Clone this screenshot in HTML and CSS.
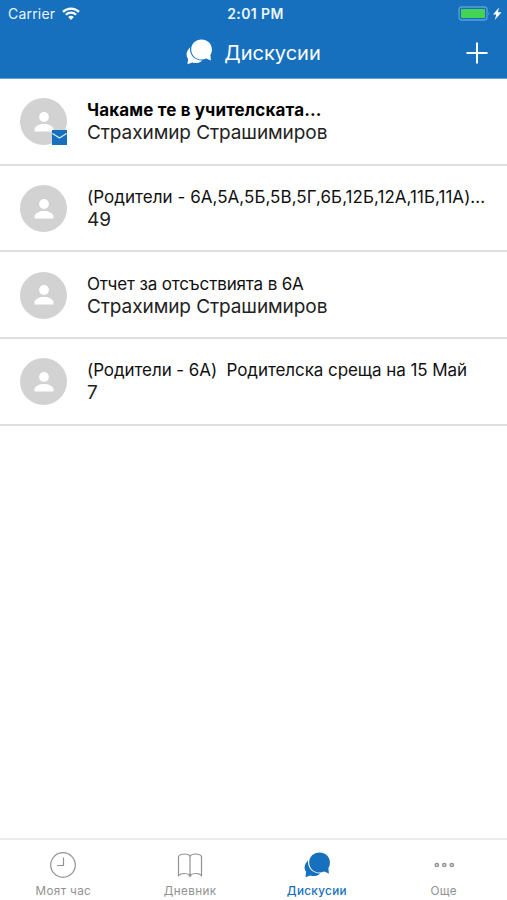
FILE: index.html
```
<!DOCTYPE html>
<html lang="bg">
<head>
<meta charset="utf-8">
<title>Дискусии</title>
<link rel="stylesheet" href="styles.css">
</head>
<body>
<svg class="defs" aria-hidden="true">
  <symbol id="chat" viewBox="0 0 26 26">
    <path d="M4.100 8.200C-.4 12.800 0 17 2.100 19.800L1.500 25.300l4.800-1.800c3.600 1.200 7.200.5 9.900-2.100C8.500 21.500 3.100 15.700 4.100 8.200z"/>
    <path d="M15.500.5C9.600.5 5.200 4.800 5.200 10.400c0 5.700 4.600 10.100 10.300 10.100 1.800 0 3.300-.4 4.700-1.100l4.700 2-.5-5.500c1-1.600 1.500-3.400 1.500-5.500C25.900 4.800 21.400.5 15.500.5z"/>
  </symbol>
  <symbol id="person" viewBox="0 0 20 20">
    <circle cx="10" cy="5" r="4.900"/>
    <path d="M.5 19.500v-2C.5 14 6 12 10 12s9.500 2 9.500 5.500v2z"/>
  </symbol>
</svg>
<div class="app">
  <header class="header">
    <div class="status">
      <div class="carrier"><span>Carrier</span>
        <svg width="18" height="13" viewBox="0 0 18 13" fill="none" stroke="#fff" stroke-width="2.300"><path d="M1 4.800a11.500 11.500 0 0 1 16 0M3.900 7.800a7.300 7.300 0 0 1 10.200 0"/><path d="M6.200 10a4 4 0 0 1 5.600 0L9 12.900z" fill="#fff" stroke="none"/></svg>
      </div>
      <div class="time">2:01 PM</div>
      <div class="power">
        <svg width="44" height="15" viewBox="0 0 44 15"><rect x="1" y="1" width="28" height="13" rx="2.500" fill="none" stroke="#5b9fd8" stroke-width="1.300"/><rect x="3" y="3" width="24" height="9" rx=".8" fill="#43d552"/><path d="M30.500 5.500q1.500 2 0 4z" fill="#5b9fd8"/><path d="M41 1.500l-6 7h3.300L36.800 14l6.700-7.700h-3.600z" fill="#fff"/></svg>
      </div>
    </div>
    <div class="nav">
      <div class="heading"><svg class="chat"><use href="#chat"/></svg><h1>Дискусии</h1></div>
      <svg class="plus" viewBox="0 0 22 22"><path d="M11 .5v21M.5 11h21"/></svg>
    </div>
  </header>
  <main class="list">
    <article class="row">
      <div class="avatar"><svg class="person"><use href="#person"/></svg>
        <svg class="mail" viewBox="0 0 15 15"><path d="M0 0h15v15H0z" fill="#1670bd"/><path d="M.5 3.500l7 4.500 7-4.500" fill="none" stroke="#d9edfc" stroke-width="1.300"/></svg></div>
      <div class="copy"><h2 class="subject unread">Чакаме те в учителската...</h2><p class="author">Страхимир Страшимиров</p></div>
    </article>
    <article class="row">
      <div class="avatar"><svg class="person"><use href="#person"/></svg></div>
      <div class="copy"><h2 class="subject classes">(Родители - 6А,5А,5Б,5В,5Г,6Б,12Б,12А,11Б,11А)...</h2><p class="author">49</p></div>
    </article>
    <article class="row">
      <div class="avatar"><svg class="person"><use href="#person"/></svg></div>
      <div class="copy"><h2 class="subject report">Отчет за отсъствията в 6А</h2><p class="author">Страхимир Страшимиров</p></div>
    </article>
    <article class="row">
      <div class="avatar"><svg class="person"><use href="#person"/></svg></div>
      <div class="copy"><h2 class="subject meeting">(Родители - 6А)&nbsp; Родителска среща на 15 Май</h2><p class="author">7</p></div>
    </article>
  </main>
  <nav class="tabs">
    <div class="tab"><svg viewBox="0 0 28 28"><circle cx="14" cy="14" r="12.300"/><path d="M14.500 6.500v8h-6.300"/></svg><span>Моят час</span></div>
    <div class="tab"><svg viewBox="0 0 28 28"><path d="M14 24V5.500Q13 3 8.500 3T2.500 5.500v19q2-2 5.500-2t6 1.500q2.500-1.500 6-1.500t5.500 2v-19Q24 3 19.500 3T14 5.500"/><circle cx="14" cy="24.500" r=".8"/></svg><span>Дневник</span></div>
    <div class="tab active"><svg class="chat"><use href="#chat"/></svg><span>Дискусии</span></div>
    <div class="tab"><svg viewBox="0 0 28 28"><g stroke-width="1.500"><circle cx="6.800" cy="14" r="1.600"/><circle cx="14.300" cy="14" r="1.600"/><circle cx="21.800" cy="14" r="1.600"/></g></svg><span>Още</span></div>
  </nav>
</div>
</body>
</html>
```
FILE: styles.css
```
* { box-sizing: border-box; }
body, h1, h2, p { margin: 0; }
body { font-family: Inter, "Noto Sans", sans-serif; background: #fff; color: #111; }
.defs { position: absolute; width: 0; height: 0; }
.app { display: flex; flex-direction: column; height: 900px; width: 507px; overflow: hidden; }
.header { height: 79px; flex: none; background: #1670bd; color: #fff; border-bottom: 1px solid #5fa3da; }
.status { height: 27px; display: grid; grid-template-columns: 1fr auto 1fr; padding: 0 5px 0 8px; align-items: center; font-size: 14px; line-height: 27px; color: #edf6fd; }
.carrier { display: flex; align-items: center; gap: 7px; letter-spacing: .2px; }
.time { font-size: 14px; font-weight: 600; letter-spacing: .4px; padding-left: 1px; }
.power { display: flex; justify-content: flex-end; }
.nav { height: 52px; display: grid; grid-template-columns: 1fr auto 1fr; align-items: center; padding: 0 19px; }
.heading { grid-column: 2; display: flex; align-items: center; gap: 12px; }
.heading h1 { font-size: 20px; line-height: 28px; font-weight: 400; }
.heading .chat { margin-bottom: 3px; }
.chat { width: 26px; height: 26px; fill: currentColor; }
.plus { width: 22px; height: 22px; justify-self: end; fill: none; stroke: #fff; stroke-width: 2; }
.list { flex: 1; }
.row { height: 86.670px; display: flex; gap: 20px; padding: 19.400px 20px 0; border-bottom: 2px solid #dedede; }
.avatar { position: relative; flex: none; width: 47px; height: 47px; border-radius: 50%; background: #d2d2d2; display: flex; align-items: center; justify-content: center; }
.person { width: 20px; height: 20px; fill: #fff; }
.mail { position: absolute; width: 15px; height: 15px; right: 0; bottom: 0; }
.copy { white-space: nowrap; padding-top: .8px; }
.subject { font-size: 17px; line-height: 23px; font-weight: 400; }
.unread { font-weight: 700; color: #000; letter-spacing: .16px; }
.classes { letter-spacing: .04px; }
.report { letter-spacing: -.15px; }
.meeting { letter-spacing: -.07px; }
.author { font-size: 19px; line-height: 22px; color: #222; letter-spacing: -.08px; }
.tabs { height: 62px; flex: none; display: grid; grid-template-columns: repeat(4, 1fr); border-top: 2px solid #ececec; color: #929292; }
.tab { display: flex; flex-direction: column; align-items: center; gap: 4px; padding-top: 11px; font-size: 11.700px; line-height: 16px; letter-spacing: .35px; }
.tab svg { width: 28px; height: 28px; fill: none; stroke: currentColor; stroke-width: 1.200; }
.tab svg.chat { width: 26px; height: 26px; margin: 1px 0; fill: currentColor; stroke: none; }
.active { color: #1670bd; font-weight: 500; }
```
